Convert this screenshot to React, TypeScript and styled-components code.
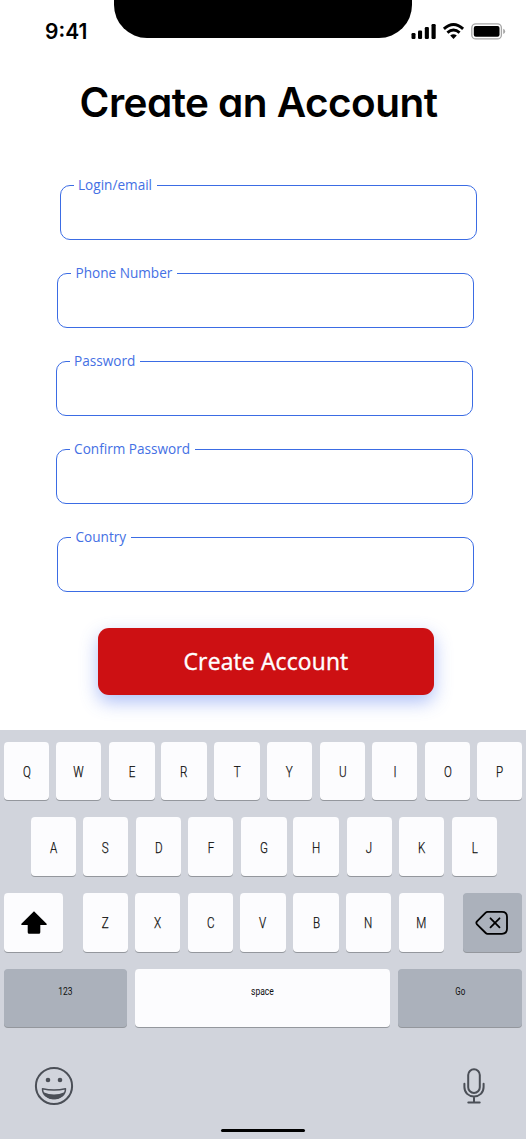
import React from "react";
import styled, { createGlobalStyle } from "styled-components";

const GlobalStyle = createGlobalStyle`
  * { box-sizing: border-box; }
  body { margin: 0; background: #fff; }
`;

const Screen = styled.main`
  width: 526px;
  height: 1139px;
  display: flex;
  flex-direction: column;
  overflow: hidden;
  background: #fff;
  font-family: "Open Sans", sans-serif;
`;

const StatusBar = styled.header`
  display: flex;
  align-items: flex-start;
  height: 40px;
  flex: none;
`;

const Time = styled.time`
  width: 113.5px;
  padding: 19px 0 0 45px;
  font: 600 21px/26px Inter, sans-serif;
  letter-spacing: 0;
  white-space: nowrap;
`;

const Notch = styled.div`
  width: 298px;
  height: 38.4px;
  border-radius: 0 0 33px 33px;
  background: #000;
`;

const Indicators = styled.svg`
  display: block;
  margin: 22px 0 0 -0.5px;
`;

const Title = styled.h1`
  margin: 40px 0 0;
  padding-right: 9px;
  height: 46px;
  text-align: center;
  font: 600 40.5px/46px Inter, sans-serif;
  font-feature-settings: "cv11" 1;
  letter-spacing: -0.55px;
  white-space: nowrap;
`;

const Form = styled.form`
  display: flex;
  flex-direction: column;
  flex: none;
  height: 604px;
  padding-top: 50px;
`;

const Field = styled.fieldset<{ $left: number }>`
  width: 417px;
  height: 64px;
  margin: 0 0 24px ${(p) => p.$left}px;
  padding: 0 13px;
  border: 1.2px solid #3b6ce4;
  border-radius: 10px;
  flex: none;
`;

const Legend = styled.legend`
  height: 19px;
  padding: 0 4.5px 2px;
  color: #4470e4;
  font-size: 13.6px;
  line-height: 17px;
  white-space: nowrap;
`;

const Submit = styled.button`
  width: 336px;
  height: 67px;
  flex: none;
  margin: 11.5px 0 0 98px;
  padding: 1px 0 0;
  border: 0;
  border-radius: 11px;
  background: #cd1013;
  color: #fff;
  font: 500 22.8px/30px "Open Sans", sans-serif;
  letter-spacing: 0.2px;
  -webkit-text-stroke: 0.4px #fff;
  box-shadow: 0 7px 18px rgba(65, 105, 235, 0.42);
`;

const Keyboard = styled.section`
  display: flex;
  flex-direction: column;
  flex: 1;
  gap: 16.7px;
  padding: 11.8px 4px 0;
  background: #d1d4dc;
`;

const KeyRow = styled.div<{ $inset?: number }>`
  display: flex;
  height: 59px;
  flex: none;
  padding-left: ${(p) => p.$inset ?? 0}px;
`;

const Key = styled.div<{ $width?: number; $gap?: number; $muted?: boolean; $small?: boolean }>`
  display: flex;
  flex: none;
  align-items: center;
  justify-content: center;
  width: ${(p) => p.$width ?? 45.3}px;
  height: 58.6px;
  margin-left: ${(p) => p.$gap ?? 0}px;
  padding: ${(p) => (p.$small ? "0 0 12.4px" : "4px 0 0")};
  border-radius: 4px;
  background: ${(p) => (p.$muted ? "#abb1bb" : "#fcfcfe")};
  box-shadow: 0 1px 0 #94979d;
  color: #111;
  font: ${(p) => (p.$small ? "400 10px/14px" : "300 14.5px/18px")} Roboto, sans-serif;
`;

const KeyIcon = styled.svg`
  display: block;
  margin-top: -3px;
`;

const Glyph = styled.span<{ $scale?: number }>`
  transform: scaleX(${(p) => p.$scale ?? 0.8});
  -webkit-text-stroke: ${(p) => (p.$scale ? 0 : 0.25)}px #111;
`;

const Dock = styled.footer`
  display: flex;
  justify-content: space-between;
  padding: 20px 36.5px 0 30px;
`;

const HomeBar = styled.div`
  flex: none;
  align-self: center;
  width: 84px;
  height: 3.4px;
  margin-top: 5.5px;
  border-radius: 2px;
  background: #000;
`;

const fields = [
  { label: "Login/email", left: 59.5 },
  { label: "Phone Number", left: 57 },
  { label: "Password", left: 55.6 },
  { label: "Confirm Password", left: 55.6 },
  { label: "Country", left: 57 },
];

const Letters = ({ text, first = 0 }: { text: string; first?: number }) => (
  <>
    {text.split("").map((c, i) => (
      <Key key={c} $gap={i === 0 ? first : i % 2 ? 6.85 : 7.8}>
        <Glyph>{c}</Glyph>
      </Key>
    ))}
  </>
);

export default function App() {
  return (
    <Screen>
      <GlobalStyle />
      <StatusBar>
        <Time>9:41</Time>
        <Notch />
        <Indicators width="96" height="18" viewBox="411 22 96 18">
          <rect x="411.5" y="33" width="4" height="6" rx="1.2" />
          <rect x="418" y="30.5" width="4.1" height="8.5" rx="1.2" />
          <rect x="424.8" y="27" width="4.1" height="12" rx="1.2" />
          <rect x="431.5" y="24" width="4.2" height="15" rx="1.2" />
          <g fill="none" stroke="#000" strokeWidth="2.9">
            <path d="M443.9 28.8Q453.5 20.2 463.1 28.8" />
            <path d="M447.4 32.7Q453.5 27.5 459.6 32.7" />
          </g>
          <path d="M450.2 35.6Q453.5 33 456.8 35.6L453.5 39Z" />
          <rect x="471.8" y="23.9" width="29.6" height="15" rx="4" fill="none" stroke="#a6a6a6" strokeWidth="1.3" />
          <rect x="473.8" y="26" width="25.7" height="10.8" rx="2" />
          <path d="M503.2 28.7Q505.2 29.5 505.2 31.4T503.2 34.1Z" fill="#a6a6a6" />
        </Indicators>
      </StatusBar>
      <Title>Create an Account</Title>
      <Form>
        {fields.map((f) => (
          <Field key={f.label} $left={f.left}>
            <Legend>{f.label}</Legend>
          </Field>
        ))}
        <Submit type="button">Create Account</Submit>
      </Form>
      <Keyboard>
        <KeyRow><Letters text="QWERTYUIOP" /></KeyRow>
        <KeyRow $inset={26.8}><Letters text="ASDFGHJKL" /></KeyRow>
        <KeyRow>
          <Key $width={59.4}>
            <KeyIcon width="28" height="26" viewBox="0 0 28 26">
              <path d="M14 1.2 26.6 13.8Q27.3 15 26 15H20.3V22.3Q20.3 23.8 18.8 23.8H9.2Q7.7 23.8 7.7 22.3V15H2Q.7 15 1.4 13.8Z" />
            </KeyIcon>
          </Key>
          <Letters text="ZXCVBNM" first={19.5} />
          <Key $width={59} $gap={18.8} $muted>
            <KeyIcon width="34" height="26" viewBox="0 0 34 26" fill="none" stroke="#000" strokeWidth="1.8" strokeLinecap="round" strokeLinejoin="round">
              <path d="M12.5 1.8H27Q32 1.8 32 6.8V18.8Q32 23.8 27 23.8H12.5Q11.5 23.8 10.7 23L2 14.3Q.7 12.8 2 11.3L10.7 2.6Q11.5 1.8 12.5 1.8Z" />
              <path d="m15.5 8.3 9 9m0-9-9 9" />
            </KeyIcon>
          </Key>
        </KeyRow>
        <KeyRow>
          <Key $width={122.5} $muted $small><Glyph $scale={0.85}>123</Glyph></Key>
          <Key $width={255.5} $gap={8.3} $small><Glyph $scale={0.85}>space</Glyph></Key>
          <Key $width={123.5} $gap={8.2} $muted $small><Glyph $scale={0.8}>Go</Glyph></Key>
        </KeyRow>
        <Dock>
          <svg width="40" height="42" viewBox="0 0 40 42" fill="none" stroke="#4b4f57" strokeWidth="2">
            <circle cx="20" cy="21" r="18.1" />
            <circle cx="14" cy="15" r="2.3" fill="#4b4f57" stroke="none" />
            <circle cx="26" cy="15" r="2.3" fill="#4b4f57" stroke="none" />
            <path d="M8.5 23.8Q20 26.3 31.5 23.8C31.5 30 26.5 33.6 20 33.6S8.5 30 8.5 23.8Z" strokeWidth="1.5" strokeLinejoin="round" />
            <path d="M9.5 27.2Q20 31.8 30.5 27.2C29 32 25.5 34.2 20 34.2S11 32 9.5 27.2Z" fill="#4b4f57" stroke="none" />
          </svg>
          <svg width="24" height="42" viewBox="0 0 24 42" fill="none" stroke="#4b4f57" strokeWidth="2" strokeLinecap="round">
            <rect x="6.2" y="4.3" width="11.6" height="23.7" rx="5.8" />
            <path d="M2.4 18.8V22C2.4 27.8 6.5 31.4 12 31.4S21.6 27.8 21.6 22V18.8M12 32V37M6.3 37.4H17.7" />
          </svg>
        </Dock>
        <HomeBar />
      </Keyboard>
    </Screen>
  );
}
